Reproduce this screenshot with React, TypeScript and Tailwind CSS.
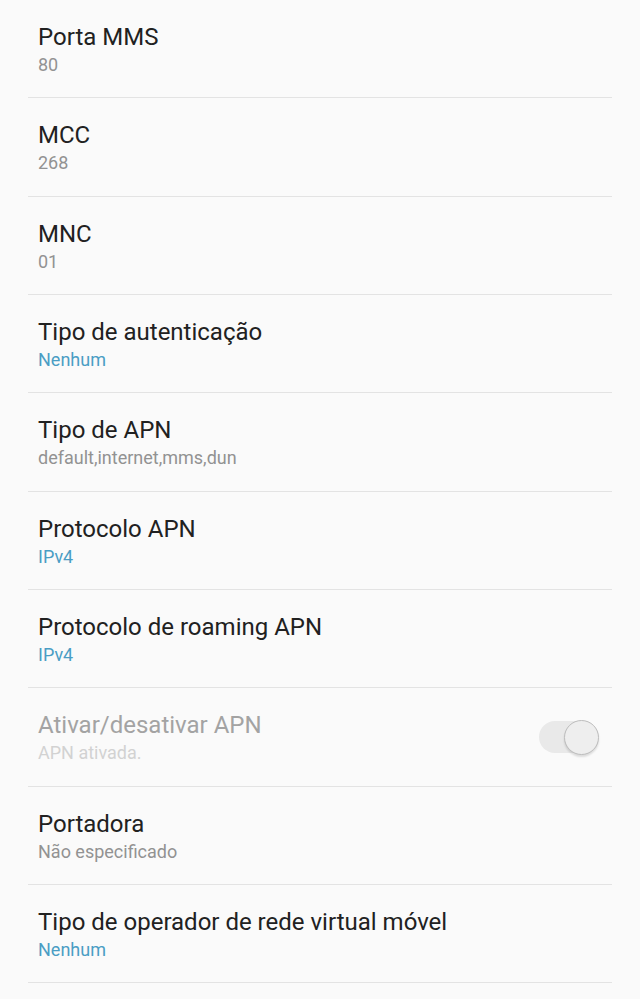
type Item = {
  title: string;
  value: string;
  tone?: "gray" | "blue";
  disabled?: boolean;
  toggle?: boolean;
};

const items: Item[] = [
  { title: "Porta MMS", value: "80" },
  { title: "MCC", value: "268" },
  { title: "MNC", value: "01" },
  { title: "Tipo de autenticação", value: "Nenhum", tone: "blue" },
  { title: "Tipo de APN", value: "default,internet,mms,dun" },
  { title: "Protocolo APN", value: "IPv4", tone: "blue" },
  { title: "Protocolo de roaming APN", value: "IPv4", tone: "blue" },
  { title: "Ativar/desativar APN", value: "APN ativada.", disabled: true, toggle: true },
  { title: "Portadora", value: "Não especificado" },
  { title: "Tipo de operador de rede virtual móvel", value: "Nenhum", tone: "blue" },
];

function Toggle() {
  return (
    <div className="relative h-[35px] w-[60px]">
      <div className="absolute left-0 top-[1px] h-[32px] w-[50px] rounded-full bg-[#e9e9e9]" />
      <div className="absolute right-0 top-0 h-[35px] w-[35px] rounded-full border border-[#bdbdbd] bg-[#eeeeee] shadow-[0_2px_2px_rgba(0,0,0,0.12)]" />
    </div>
  );
}

function SettingRow({ title, value, tone = "gray", disabled, toggle }: Item) {
  const titleColor = disabled ? "text-[#a3a3a3]" : "text-[#212121]";
  const valueColor = disabled
    ? "text-[#d2d2d2]"
    : tone === "blue"
      ? "text-[#4a9dc4]"
      : "text-[#929292]";

  return (
    <div className="relative mx-[28px] h-[98.33px] border-b border-[#e3e3e3] pl-[10px] pr-[13px] pt-[22px]">
      <div className={`text-[24px] leading-[30px] ${titleColor}`}>{title}</div>
      <div className={`text-[18px] leading-[26px] ${valueColor}`}>{value}</div>
      {toggle && (
        <div className="absolute right-[13px] top-[32px]">
          <Toggle />
        </div>
      )}
    </div>
  );
}

export default function App() {
  return (
    <div
      className="min-h-[999px] w-[640px] bg-[#fafafa]"
      style={{ fontFamily: "Roboto, 'Noto Sans', sans-serif" }}
    >
      {items.map((item) => (
        <SettingRow key={item.title} {...item} />
      ))}
    </div>
  );
}
